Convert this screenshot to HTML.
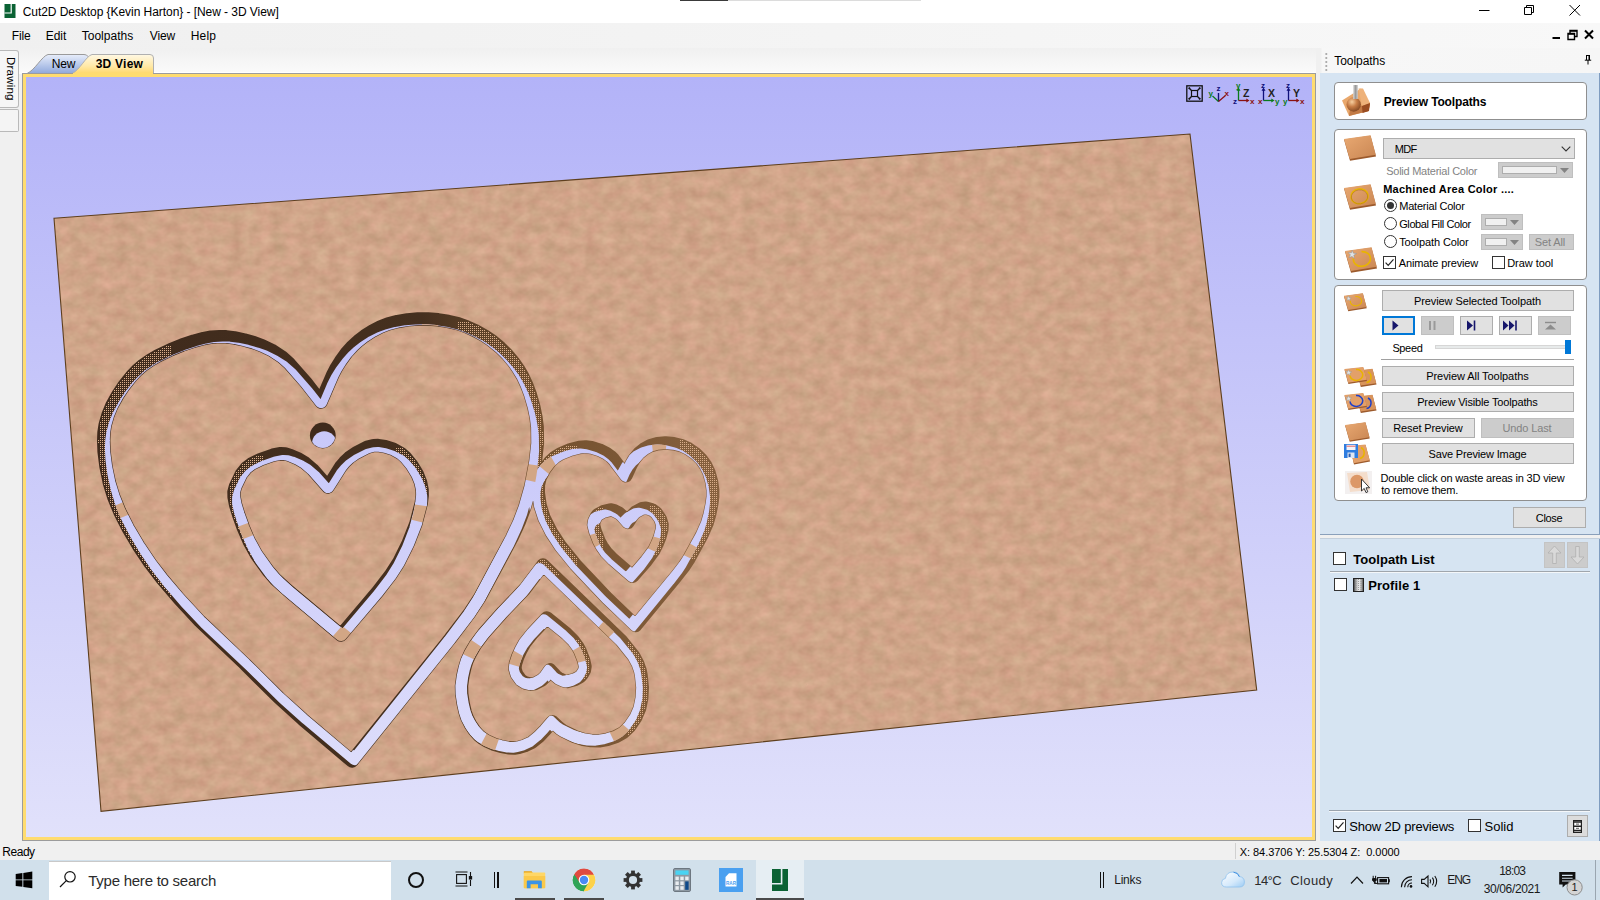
<!DOCTYPE html>
<html lang="en"><head><meta charset="utf-8"><title>Cut2D Desktop {Kevin Harton} - [New - 3D View]</title>
<style>
*{box-sizing:border-box;margin:0;padding:0}
html,body{width:1600px;height:900px;overflow:hidden;background:#f0f0f0}
body{position:relative;font-family:"Liberation Sans",sans-serif;font-size:12px;color:#000}
.t{position:absolute;white-space:pre;line-height:1;display:block}
.abs{position:absolute}
#titlebar{position:absolute;left:0;top:0;width:1600px;height:23px;background:#fff}
#menubar{position:absolute;left:0;top:23px;width:1600px;height:25px;background:linear-gradient(90deg,#f0f0f0,#f3f3f3 40%,#f8f8f8)}
#tabstrip{position:absolute;left:0;top:48px;width:1320px;height:26px;background:linear-gradient(#f0f0f0,#fbfbfb)}
#viewwrap{position:absolute;left:22px;top:73px;width:1294px;height:768px;background:#9c9c9c}
#viewyellow{position:absolute;left:1px;top:1px;width:1292px;height:766px;background:#ffdc70}
#view{position:absolute;left:3px;top:3px;width:1286px;height:760px;background:linear-gradient(#b3b3f8,#e1e1fb);overflow:hidden}
#side{position:absolute;left:1320px;top:48px;width:280px;height:793px;background:#d6e4f2}
#sidehead{position:absolute;left:0;top:0;width:280px;height:25px;background:linear-gradient(90deg,#f0f0f0 0,#f0f0f0 1px,#f7f7f7 2px,#f6f6f6)}
#statusbar{position:absolute;left:0;top:841px;width:1600px;height:19px;background:#f0f0f0}
#taskbar{position:absolute;left:0;top:860px;width:1600px;height:40px;background:#d1e0eb}
.box{position:absolute;background:#fff;border:1px solid #8f8f8f;border-radius:4px}
.btn{position:absolute;background:#e1e1e1;border:1px solid #adadad}
.btn.dis{background:#cccccc;border-color:#bfbfbf}
.cb{position:absolute;width:13px;height:13px;background:#fff;border:1px solid #333}
.rad{position:absolute;width:13px;height:13px;background:#fff;border:1px solid #333;border-radius:50%}
</style></head><body>

<div id="titlebar">
<div class="abs" style="left:680px;top:0;width:48px;height:1px;background:#3a3a3a"></div>
<div class="abs" style="left:728px;top:0;width:193px;height:1px;background:#dcdcdc"></div>
<svg class="abs" style="left:4px;top:4px" width="12" height="14" viewBox="0 0 12 14"><rect x="0.5" y="0" width="11" height="14" fill="#0b6234"/><path d="M6.6 0V8.4H0.5V9.6H7.8V0Z" fill="#fff"/></svg>
<span class="t" style="left:22.7px;top:6.00px;font-size:12px;letter-spacing:-0.056px;">Cut2D Desktop {Kevin Harton} - [New - 3D View]</span>
<svg class="abs" style="left:1470px;top:0" width="130" height="23" viewBox="0 0 130 23" fill="none" stroke="#000" stroke-width="1"><path d="M9 10.5H19.5"/><path d="M54.5 7.5H61.5V14.5H54.5Z M56.5 7.5V5.5H63.5V12.5H61.5"/><path d="M99.5 5L110 15.5M110 5L99.5 15.5"/></svg>
</div>
<div id="menubar">
<span class="t" style="left:11.7px;top:7.00px;font-size:12px;letter-spacing:-0.084px;">File</span>
<span class="t" style="left:45.7px;top:7.00px;font-size:12px;letter-spacing:-0.044px;">Edit</span>
<span class="t" style="left:81.7px;top:7.00px;font-size:12px;letter-spacing:0.015px;">Toolpaths</span>
<span class="t" style="left:149.7px;top:7.00px;font-size:12px;letter-spacing:-0.073px;">View</span>
<span class="t" style="left:190.7px;top:7.00px;font-size:12px;letter-spacing:0.205px;">Help</span>
<svg class="abs" style="left:1548px;top:6px" width="50" height="12" viewBox="0 0 50 12" fill="none" stroke="#000"><path d="M4.5 9H12" stroke-width="2"/><path d="M20 4.5H26.5V10.5H20Z M22 4V1.5H29V7.5H27" stroke-width="1.4"/><path d="M20 5H26.5M22 2H29" stroke-width="1.6"/><path d="M37 1.5L45 9.5M45 1.5L37 9.5" stroke-width="2"/></svg>
</div>
<div id="tabstrip"></div>
<div class="abs" style="left:22px;top:72px;width:1294px;height:1px;background:#fff"></div>
<div class="abs" style="left:1316px;top:48px;width:4px;height:793px;background:#f0f0f0"></div>
<div class="abs" style="left:0;top:50px;width:19px;height:58px;background:#f6f6f6;border:1px solid #b9b9b9;border-left:none;border-radius:0 3px 3px 0"></div>
<div class="abs" style="left:0;top:109px;width:19px;height:23px;background:#f4f4f4;border:1px solid #b9b9b9;border-left:none;border-radius:0 2px 2px 0"></div>
<span class="t" style="left:4.5px;top:57px;font-size:11.5px;letter-spacing:0.2px;writing-mode:vertical-rl;line-height:12px">Drawing</span>
<svg class="abs" style="left:26px;top:52px" width="140" height="24" viewBox="0 0 140 24"><defs><linearGradient id="tb" x1="0" y1="0" x2="0" y2="1"><stop offset="0" stop-color="#e8eefb"/><stop offset="1" stop-color="#8fa8dc"/></linearGradient><linearGradient id="ty" x1="0" y1="0" x2="0" y2="1"><stop offset="0" stop-color="#fff8e4"/><stop offset="0.6" stop-color="#ffe9a8"/><stop offset="1" stop-color="#ffd86c"/></linearGradient></defs><path d="M1 21.5 C9 18 16 4 22 2.5 H58 Q61 2.5 62 4.5 V21.5Z" fill="url(#tb)" stroke="#9a9a9a" stroke-width="1"/><path d="M46 21.5 C54 18 60 4 66 2.5 H124 Q127.5 2.5 127.5 6 V21.5 H46Z" fill="url(#ty)"/><path d="M46 21.5 C54 18 60 4 66 2.5 H124 Q127.5 2.5 127.5 6 V21.5" fill="none" stroke="#b0b0b0" stroke-width="1"/></svg>
<span class="t" style="left:51.7px;top:58.00px;font-size:12px;letter-spacing:-0.169px;">New</span>
<span class="t" style="left:95.7px;top:58.00px;font-size:12px;font-weight:700;letter-spacing:0.242px;">3D View</span>
<div id="viewwrap"><div id="viewyellow"><div id="view">
<svg class="abs" style="left:0;top:0" width="1287" height="760" viewBox="26 77 1287 760">
<defs><linearGradient id="bg" gradientUnits="userSpaceOnUse" x1="0" y1="77" x2="0" y2="837"><stop offset="0" stop-color="#b3b3f8"/><stop offset="1" stop-color="#e1e1fb"/></linearGradient><linearGradient id="wall" gradientUnits="userSpaceOnUse" x1="100" y1="0" x2="720" y2="0"><stop offset="0" stop-color="#3f2a1c"/><stop offset="0.52" stop-color="#45301f"/><stop offset="0.72" stop-color="#74512f"/><stop offset="1" stop-color="#86603e"/></linearGradient><pattern id="dith" patternUnits="userSpaceOnUse" x="0" y="0" width="2" height="2"><rect x="0" y="0" width="1" height="1" fill="#d9ad8a"/></pattern><mask id="dmask" maskUnits="userSpaceOnUse" x="26" y="77" width="1287" height="760"><g fill="#fff"><rect x="92" y="345" width="80" height="260"/><rect x="458" y="322" width="90" height="150"/><rect x="226" y="456" width="38" height="110"/><rect x="396" y="448" width="32" height="80"/><rect x="530" y="446" width="48" height="130"/><rect x="680" y="440" width="45" height="120"/><rect x="590" y="505" width="14" height="50"/><rect x="650" y="505" width="18" height="50"/><rect x="628" y="640" width="24" height="100"/><rect x="572" y="640" width="20" height="40"/></g></mask><filter id="mdf" x="0" y="0" width="100%" height="100%" color-interpolation-filters="sRGB"><feTurbulence type="fractalNoise" baseFrequency="0.07 0.09" numOctaves="3" seed="11" result="n"/><feColorMatrix in="n" type="matrix" values="0.13 0.05 0 0 0.722  0.13 -0.03 0 0 0.594  0.13 0.01 0 0 0.464  0 0 0 0 1" result="c"/><feComposite in="c" in2="SourceGraphic" operator="in"/></filter><mask id="slot" maskUnits="userSpaceOnUse" x="26" y="77" width="1287" height="760"><path d="M321.0,402.0 306.0,382.7 289.5,363.8 281.7,356.8 271.5,350.2 262.1,345.7 254.1,342.7 244.3,340.0 234.4,337.9 226.1,336.8 219.7,336.6 211.2,337.2 203.7,338.6 193.8,341.2 181.8,345.2 170.7,349.7 157.4,356.1 150.3,360.2 143.5,364.9 137.1,370.4 131.6,376.2 123.8,386.0 117.8,394.9 111.8,405.8 108.0,415.0 105.2,424.8 104.0,432.6 103.7,440.9 104.1,451.7 106.0,466.5 109.3,482.5 113.7,496.9 119.8,511.7 127.9,527.8 138.6,545.9 150.2,563.2 162.2,578.9 179.3,599.0 199.9,621.2 245.0,664.0 278.8,697.6 302.8,719.3 352.0,761.0 450.0,638.9 470.2,612.2 479.7,597.7 511.8,537.9 519.3,521.7 524.8,507.2 530.5,487.2 535.4,461.5 537.4,443.2 537.2,427.0 535.9,417.0 533.8,406.8 530.3,394.7 526.8,385.3 522.6,376.2 518.3,369.0 513.6,362.2 507.1,354.5 500.0,347.5 491.8,340.8 484.8,336.0 475.5,330.8 466.0,326.5 458.3,323.8 448.3,321.4 438.1,319.8 428.0,319.0 417.8,319.0 407.5,319.9 397.5,321.6 388.0,324.1 380.3,327.1 373.1,330.7 364.7,336.0 358.4,340.8 352.4,346.4 346.8,352.5 340.5,361.2 336.1,368.2 332.5,375.3 321.0,402.0Z M328.0,487.0 312.6,469.5 304.2,462.4 298.8,459.2 289.3,455.1 285.3,454.0 280.7,453.7 272.8,455.2 260.6,459.5 251.4,464.1 246.4,467.8 241.4,474.1 235.5,486.3 234.0,491.9 234.1,496.9 235.6,504.8 238.6,514.6 243.3,527.6 249.0,541.0 256.7,554.9 268.4,571.2 274.9,578.7 287.2,589.9 341.0,635.0 378.0,591.3 390.8,574.7 399.0,561.9 408.2,543.2 415.9,523.6 421.2,503.4 422.2,495.5 422.1,489.8 420.5,482.2 417.3,474.3 411.7,465.0 405.3,457.3 400.7,453.3 393.1,449.2 385.2,446.7 378.0,445.5 373.5,445.6 367.3,447.3 356.1,453.0 349.4,457.6 344.6,462.2 340.7,466.9 328.0,487.0Z M625.9,475.8 613.6,459.4 610.5,456.4 606.4,453.5 599.5,450.1 591.6,447.7 585.7,446.9 579.2,447.5 570.4,449.8 560.5,453.9 554.8,457.4 549.9,461.9 544.3,469.4 540.1,477.6 538.4,484.8 538.3,492.8 540.1,505.6 544.1,518.0 551.4,532.5 560.7,546.6 575.5,564.8 606.7,597.9 635.6,625.5 676.0,576.5 684.3,565.8 688.2,559.9 701.6,535.6 707.1,523.1 709.5,514.9 711.7,504.3 712.7,496.7 712.7,490.0 711.5,481.5 708.9,472.4 705.6,465.5 701.2,459.3 695.1,453.4 688.6,448.9 681.8,445.7 673.7,443.7 665.5,443.0 657.3,443.7 650.4,445.7 644.0,449.2 639.0,453.3 634.1,459.2 630.8,464.9 625.9,475.8Z M543.0,565.0 524.8,589.0 503.0,611.8 483.7,633.5 475.1,645.1 470.2,653.5 466.8,661.1 464.8,667.6 462.9,676.0 461.5,685.9 461.7,693.8 463.2,703.7 465.1,712.1 467.2,718.2 470.9,725.3 474.4,730.4 478.5,735.1 481.6,737.8 486.6,740.9 494.3,744.3 500.5,746.2 508.3,747.8 514.5,748.0 518.8,747.4 524.7,745.6 532.0,742.2 538.9,736.5 545.0,730.2 552.3,721.7 559.5,728.4 563.3,731.0 574.9,736.6 583.3,739.3 591.3,740.6 599.3,740.8 607.4,739.4 615.8,736.7 623.3,732.5 629.4,726.7 635.5,717.8 639.6,708.3 641.7,698.1 642.3,687.4 641.0,675.0 640.0,670.2 637.8,663.9 633.7,656.3 620.9,640.3 543.0,565.0Z M627.8,522.5 622.2,516.0 619.1,513.3 613.6,510.5 610.5,509.9 603.2,511.8 598.0,514.6 596.2,516.8 594.1,521.2 593.5,525.0 595.2,531.5 599.0,541.2 601.8,546.3 606.1,552.4 612.9,559.4 632.6,576.4 646.0,561.0 653.7,550.6 657.0,543.9 659.8,536.9 661.8,529.6 662.1,524.7 660.3,519.0 655.9,512.7 651.5,509.6 646.0,508.1 642.1,508.6 635.6,512.1 632.4,515.4 627.8,522.5Z M549.9,669.8 555.5,675.9 558.5,678.4 564.0,681.0 567.2,681.5 574.7,679.5 580.1,676.6 582.0,674.4 584.4,670.2 585.0,666.5 583.6,660.2 580.0,651.0 577.3,646.1 573.1,640.4 566.4,633.8 546.9,617.9 532.6,633.1 524.4,643.4 520.8,649.9 517.7,656.8 515.4,663.9 514.9,668.6 516.5,674.1 520.8,680.1 525.2,682.9 530.8,684.2 534.8,683.6 541.6,680.0 545.0,676.8 549.9,669.8Z" fill="none" stroke="#fff" stroke-width="12.2" stroke-linejoin="round"/><circle cx="322.8" cy="435.5" r="12.5" fill="#fff"/></mask></defs>
<polygon points="54,218.3 1190,134 1256.7,690 101,811.3" fill="#cfa483" filter="url(#mdf)"/>
<polygon points="54,218.3 1190,134 1256.7,690 101,811.3" fill="none" stroke="#5e3f1e" stroke-width="1.1" stroke-linejoin="miter"/>
<path d="M321.0,402.0 306.0,382.7 289.5,363.8 281.7,356.8 271.5,350.2 262.1,345.7 254.1,342.7 244.3,340.0 234.4,337.9 226.1,336.8 219.7,336.6 211.2,337.2 203.7,338.6 193.8,341.2 181.8,345.2 170.7,349.7 157.4,356.1 150.3,360.2 143.5,364.9 137.1,370.4 131.6,376.2 123.8,386.0 117.8,394.9 111.8,405.8 108.0,415.0 105.2,424.8 104.0,432.6 103.7,440.9 104.1,451.7 106.0,466.5 109.3,482.5 113.7,496.9 119.8,511.7 127.9,527.8 138.6,545.9 150.2,563.2 162.2,578.9 179.3,599.0 199.9,621.2 245.0,664.0 278.8,697.6 302.8,719.3 352.0,761.0 450.0,638.9 470.2,612.2 479.7,597.7 511.8,537.9 519.3,521.7 524.8,507.2 530.5,487.2 535.4,461.5 537.4,443.2 537.2,427.0 535.9,417.0 533.8,406.8 530.3,394.7 526.8,385.3 522.6,376.2 518.3,369.0 513.6,362.2 507.1,354.5 500.0,347.5 491.8,340.8 484.8,336.0 475.5,330.8 466.0,326.5 458.3,323.8 448.3,321.4 438.1,319.8 428.0,319.0 417.8,319.0 407.5,319.9 397.5,321.6 388.0,324.1 380.3,327.1 373.1,330.7 364.7,336.0 358.4,340.8 352.4,346.4 346.8,352.5 340.5,361.2 336.1,368.2 332.5,375.3 321.0,402.0Z M328.0,487.0 312.6,469.5 304.2,462.4 298.8,459.2 289.3,455.1 285.3,454.0 280.7,453.7 272.8,455.2 260.6,459.5 251.4,464.1 246.4,467.8 241.4,474.1 235.5,486.3 234.0,491.9 234.1,496.9 235.6,504.8 238.6,514.6 243.3,527.6 249.0,541.0 256.7,554.9 268.4,571.2 274.9,578.7 287.2,589.9 341.0,635.0 378.0,591.3 390.8,574.7 399.0,561.9 408.2,543.2 415.9,523.6 421.2,503.4 422.2,495.5 422.1,489.8 420.5,482.2 417.3,474.3 411.7,465.0 405.3,457.3 400.7,453.3 393.1,449.2 385.2,446.7 378.0,445.5 373.5,445.6 367.3,447.3 356.1,453.0 349.4,457.6 344.6,462.2 340.7,466.9 328.0,487.0Z M625.9,475.8 613.6,459.4 610.5,456.4 606.4,453.5 599.5,450.1 591.6,447.7 585.7,446.9 579.2,447.5 570.4,449.8 560.5,453.9 554.8,457.4 549.9,461.9 544.3,469.4 540.1,477.6 538.4,484.8 538.3,492.8 540.1,505.6 544.1,518.0 551.4,532.5 560.7,546.6 575.5,564.8 606.7,597.9 635.6,625.5 676.0,576.5 684.3,565.8 688.2,559.9 701.6,535.6 707.1,523.1 709.5,514.9 711.7,504.3 712.7,496.7 712.7,490.0 711.5,481.5 708.9,472.4 705.6,465.5 701.2,459.3 695.1,453.4 688.6,448.9 681.8,445.7 673.7,443.7 665.5,443.0 657.3,443.7 650.4,445.7 644.0,449.2 639.0,453.3 634.1,459.2 630.8,464.9 625.9,475.8Z M543.0,565.0 524.8,589.0 503.0,611.8 483.7,633.5 475.1,645.1 470.2,653.5 466.8,661.1 464.8,667.6 462.9,676.0 461.5,685.9 461.7,693.8 463.2,703.7 465.1,712.1 467.2,718.2 470.9,725.3 474.4,730.4 478.5,735.1 481.6,737.8 486.6,740.9 494.3,744.3 500.5,746.2 508.3,747.8 514.5,748.0 518.8,747.4 524.7,745.6 532.0,742.2 538.9,736.5 545.0,730.2 552.3,721.7 559.5,728.4 563.3,731.0 574.9,736.6 583.3,739.3 591.3,740.6 599.3,740.8 607.4,739.4 615.8,736.7 623.3,732.5 629.4,726.7 635.5,717.8 639.6,708.3 641.7,698.1 642.3,687.4 641.0,675.0 640.0,670.2 637.8,663.9 633.7,656.3 620.9,640.3 543.0,565.0Z M627.8,522.5 622.2,516.0 619.1,513.3 613.6,510.5 610.5,509.9 603.2,511.8 598.0,514.6 596.2,516.8 594.1,521.2 593.5,525.0 595.2,531.5 599.0,541.2 601.8,546.3 606.1,552.4 612.9,559.4 632.6,576.4 646.0,561.0 653.7,550.6 657.0,543.9 659.8,536.9 661.8,529.6 662.1,524.7 660.3,519.0 655.9,512.7 651.5,509.6 646.0,508.1 642.1,508.6 635.6,512.1 632.4,515.4 627.8,522.5Z M549.9,669.8 555.5,675.9 558.5,678.4 564.0,681.0 567.2,681.5 574.7,679.5 580.1,676.6 582.0,674.4 584.4,670.2 585.0,666.5 583.6,660.2 580.0,651.0 577.3,646.1 573.1,640.4 566.4,633.8 546.9,617.9 532.6,633.1 524.4,643.4 520.8,649.9 517.7,656.8 515.4,663.9 514.9,668.6 516.5,674.1 520.8,680.1 525.2,682.9 530.8,684.2 534.8,683.6 541.6,680.0 545.0,676.8 549.9,669.8Z" fill="none" stroke="url(#wall)" stroke-width="13.4" stroke-linejoin="round"/>
<circle cx="322.8" cy="435.5" r="12.9" fill="#3f2a1c"/>
<g mask="url(#dmask)" shape-rendering="crispEdges"><path d="M321.0,402.0 306.0,382.7 289.5,363.8 281.7,356.8 271.5,350.2 262.1,345.7 254.1,342.7 244.3,340.0 234.4,337.9 226.1,336.8 219.7,336.6 211.2,337.2 203.7,338.6 193.8,341.2 181.8,345.2 170.7,349.7 157.4,356.1 150.3,360.2 143.5,364.9 137.1,370.4 131.6,376.2 123.8,386.0 117.8,394.9 111.8,405.8 108.0,415.0 105.2,424.8 104.0,432.6 103.7,440.9 104.1,451.7 106.0,466.5 109.3,482.5 113.7,496.9 119.8,511.7 127.9,527.8 138.6,545.9 150.2,563.2 162.2,578.9 179.3,599.0 199.9,621.2 245.0,664.0 278.8,697.6 302.8,719.3 352.0,761.0 450.0,638.9 470.2,612.2 479.7,597.7 511.8,537.9 519.3,521.7 524.8,507.2 530.5,487.2 535.4,461.5 537.4,443.2 537.2,427.0 535.9,417.0 533.8,406.8 530.3,394.7 526.8,385.3 522.6,376.2 518.3,369.0 513.6,362.2 507.1,354.5 500.0,347.5 491.8,340.8 484.8,336.0 475.5,330.8 466.0,326.5 458.3,323.8 448.3,321.4 438.1,319.8 428.0,319.0 417.8,319.0 407.5,319.9 397.5,321.6 388.0,324.1 380.3,327.1 373.1,330.7 364.7,336.0 358.4,340.8 352.4,346.4 346.8,352.5 340.5,361.2 336.1,368.2 332.5,375.3 321.0,402.0Z M328.0,487.0 312.6,469.5 304.2,462.4 298.8,459.2 289.3,455.1 285.3,454.0 280.7,453.7 272.8,455.2 260.6,459.5 251.4,464.1 246.4,467.8 241.4,474.1 235.5,486.3 234.0,491.9 234.1,496.9 235.6,504.8 238.6,514.6 243.3,527.6 249.0,541.0 256.7,554.9 268.4,571.2 274.9,578.7 287.2,589.9 341.0,635.0 378.0,591.3 390.8,574.7 399.0,561.9 408.2,543.2 415.9,523.6 421.2,503.4 422.2,495.5 422.1,489.8 420.5,482.2 417.3,474.3 411.7,465.0 405.3,457.3 400.7,453.3 393.1,449.2 385.2,446.7 378.0,445.5 373.5,445.6 367.3,447.3 356.1,453.0 349.4,457.6 344.6,462.2 340.7,466.9 328.0,487.0Z M625.9,475.8 613.6,459.4 610.5,456.4 606.4,453.5 599.5,450.1 591.6,447.7 585.7,446.9 579.2,447.5 570.4,449.8 560.5,453.9 554.8,457.4 549.9,461.9 544.3,469.4 540.1,477.6 538.4,484.8 538.3,492.8 540.1,505.6 544.1,518.0 551.4,532.5 560.7,546.6 575.5,564.8 606.7,597.9 635.6,625.5 676.0,576.5 684.3,565.8 688.2,559.9 701.6,535.6 707.1,523.1 709.5,514.9 711.7,504.3 712.7,496.7 712.7,490.0 711.5,481.5 708.9,472.4 705.6,465.5 701.2,459.3 695.1,453.4 688.6,448.9 681.8,445.7 673.7,443.7 665.5,443.0 657.3,443.7 650.4,445.7 644.0,449.2 639.0,453.3 634.1,459.2 630.8,464.9 625.9,475.8Z M543.0,565.0 524.8,589.0 503.0,611.8 483.7,633.5 475.1,645.1 470.2,653.5 466.8,661.1 464.8,667.6 462.9,676.0 461.5,685.9 461.7,693.8 463.2,703.7 465.1,712.1 467.2,718.2 470.9,725.3 474.4,730.4 478.5,735.1 481.6,737.8 486.6,740.9 494.3,744.3 500.5,746.2 508.3,747.8 514.5,748.0 518.8,747.4 524.7,745.6 532.0,742.2 538.9,736.5 545.0,730.2 552.3,721.7 559.5,728.4 563.3,731.0 574.9,736.6 583.3,739.3 591.3,740.6 599.3,740.8 607.4,739.4 615.8,736.7 623.3,732.5 629.4,726.7 635.5,717.8 639.6,708.3 641.7,698.1 642.3,687.4 641.0,675.0 640.0,670.2 637.8,663.9 633.7,656.3 620.9,640.3 543.0,565.0Z M627.8,522.5 622.2,516.0 619.1,513.3 613.6,510.5 610.5,509.9 603.2,511.8 598.0,514.6 596.2,516.8 594.1,521.2 593.5,525.0 595.2,531.5 599.0,541.2 601.8,546.3 606.1,552.4 612.9,559.4 632.6,576.4 646.0,561.0 653.7,550.6 657.0,543.9 659.8,536.9 661.8,529.6 662.1,524.7 660.3,519.0 655.9,512.7 651.5,509.6 646.0,508.1 642.1,508.6 635.6,512.1 632.4,515.4 627.8,522.5Z M549.9,669.8 555.5,675.9 558.5,678.4 564.0,681.0 567.2,681.5 574.7,679.5 580.1,676.6 582.0,674.4 584.4,670.2 585.0,666.5 583.6,660.2 580.0,651.0 577.3,646.1 573.1,640.4 566.4,633.8 546.9,617.9 532.6,633.1 524.4,643.4 520.8,649.9 517.7,656.8 515.4,663.9 514.9,668.6 516.5,674.1 520.8,680.1 525.2,682.9 530.8,684.2 534.8,683.6 541.6,680.0 545.0,676.8 549.9,669.8Z" fill="none" stroke="url(#dith)" stroke-width="10.5" stroke-linejoin="round"/></g>
<g mask="url(#slot)">
<path d="M322.2,410.9 307.5,392.2 291.3,373.9 283.6,367.0 273.6,360.7 264.5,356.3 256.7,353.5 247.2,350.8 237.5,348.7 229.4,347.7 223.1,347.5 214.9,348.1 207.6,349.4 198.0,352.0 186.4,355.9 175.6,360.2 162.7,366.4 155.8,370.4 149.2,374.9 143.0,380.3 137.7,385.9 130.2,395.4 124.5,404.1 118.7,414.6 115.0,423.6 112.4,433.0 111.3,440.6 111.0,448.6 111.5,459.2 113.4,473.5 116.8,489.0 121.1,503.0 127.1,517.4 135.2,533.0 145.7,550.5 157.1,567.3 168.9,582.5 185.6,602.0 205.9,623.6 250.0,665.1 283.1,697.6 306.6,718.7 354.8,759.2 449.3,640.8 468.8,614.8 477.9,600.8 508.7,542.8 515.9,527.0 521.2,513.0 526.6,493.6 531.2,468.7 533.0,450.9 532.7,435.2 531.4,425.5 529.3,415.6 525.8,403.9 522.4,394.7 518.1,385.9 514.0,378.9 509.3,372.4 502.9,364.9 496.0,358.1 488.0,351.6 481.1,346.9 472.0,341.8 462.8,337.7 455.2,335.1 445.5,332.7 435.6,331.2 425.7,330.4 415.8,330.5 405.8,331.3 396.1,332.9 386.9,335.4 379.4,338.3 372.4,341.7 364.3,346.9 358.2,351.6 352.3,357.0 347.0,363.0 340.8,371.4 336.6,378.2 333.2,385.0 322.2,410.9Z M329.6,493.4 314.5,476.4 306.3,469.5 301.0,466.4 291.7,462.5 287.8,461.4 283.3,461.1 275.7,462.5 263.8,466.8 254.9,471.2 250.1,474.8 245.2,480.9 239.6,492.7 238.2,498.2 238.2,503.0 239.8,510.7 242.8,520.2 247.4,532.7 253.1,545.8 260.6,559.3 272.2,575.1 278.5,582.3 290.6,593.2 343.2,637.0 378.9,594.6 391.3,578.4 399.1,566.0 408.0,547.9 415.3,528.9 420.4,509.3 421.3,501.7 421.1,496.1 419.5,488.7 416.4,481.1 410.9,472.0 404.6,464.5 400.1,460.7 392.7,456.8 385.0,454.3 377.9,453.1 373.6,453.3 367.6,454.9 356.7,460.4 350.2,464.9 345.6,469.3 341.8,473.9 329.6,493.4Z M619.4,482.6 607.2,466.6 604.2,463.7 600.2,460.8 593.5,457.6 585.8,455.3 580.0,454.5 573.8,455.0 565.2,457.4 555.5,461.3 550.1,464.6 545.3,469.0 539.9,476.3 535.9,484.3 534.3,491.3 534.2,499.0 536.1,511.5 540.1,523.4 547.3,537.5 556.4,551.2 570.9,568.9 601.5,601.0 629.8,627.8 668.8,580.2 676.8,569.8 680.6,564.1 693.4,540.5 698.7,528.4 701.0,520.4 703.1,510.1 703.9,502.8 703.9,496.3 702.7,488.1 700.1,479.3 696.8,472.6 692.5,466.5 686.6,460.8 680.2,456.4 673.5,453.4 665.6,451.4 657.7,450.7 649.7,451.4 643.0,453.4 636.8,456.7 631.9,460.7 627.2,466.4 624.0,472.0 619.4,482.6Z M539.3,569.0 521.7,592.3 500.7,614.4 482.0,635.5 473.7,646.7 469.0,654.9 465.8,662.3 463.9,668.5 462.1,676.7 460.9,686.3 461.1,693.9 462.6,703.6 464.5,711.8 466.5,717.6 470.2,724.6 473.6,729.5 477.6,734.0 480.7,736.6 485.6,739.7 493.1,742.9 499.2,744.8 506.7,746.4 512.8,746.6 517.0,746.0 522.7,744.3 529.8,740.9 536.5,735.4 542.4,729.3 549.4,721.0 556.5,727.6 560.2,730.1 571.5,735.5 579.7,738.1 587.5,739.4 595.3,739.6 603.1,738.3 611.3,735.6 618.6,731.5 624.5,725.9 630.4,717.3 634.2,708.1 636.3,698.1 636.7,687.8 635.4,675.8 634.4,671.1 632.2,665.0 628.2,657.6 615.6,642.1 539.3,569.0Z M621.5,527.9 616.0,521.5 613.0,518.9 607.7,516.2 604.6,515.6 597.5,517.4 592.5,520.2 590.8,522.3 588.7,526.5 588.2,530.3 589.9,536.6 593.6,546.0 596.4,551.0 600.6,556.8 607.3,563.6 626.5,580.1 639.5,565.2 646.9,555.0 650.1,548.6 652.8,541.8 654.6,534.7 654.9,529.9 653.1,524.4 648.8,518.3 644.5,515.3 639.1,513.8 635.3,514.4 629.0,517.8 625.9,520.9 621.5,527.9Z M546.7,670.7 552.2,676.7 555.1,679.1 560.5,681.6 563.6,682.1 570.9,680.1 576.1,677.3 578.0,675.2 580.2,671.1 580.9,667.5 579.4,661.4 575.9,652.5 573.2,647.7 569.1,642.2 562.5,635.8 543.5,620.3 529.6,635.1 521.8,645.1 518.2,651.4 515.3,658.1 513.1,665.0 512.7,669.6 514.3,674.8 518.5,680.7 522.8,683.4 528.2,684.7 532.1,684.1 538.7,680.6 542.0,677.5 546.7,670.7Z" fill="none" stroke="url(#bg)" stroke-width="12.2" stroke-linejoin="round"/>
<circle cx="324.2" cy="443.4" r="12.1" fill="url(#bg)"/>
<path d="M121.1,503.0 121.9,504.9 122.6,506.9 123.4,508.9 124.1,510.6 124.8,512.3 125.6,514.0 126.3,515.7 M437.6,331.4 435.6,331.2 433.6,331.0 431.6,330.8 429.7,330.6 427.7,330.5 425.7,330.4 423.8,330.4 421.8,330.3 M529.2,480.6 529.6,478.7 529.9,476.9 530.3,474.8 530.6,472.7 530.9,470.7 531.2,468.7 531.5,466.7 531.8,464.6 M244.2,524.4 245.0,526.5 245.8,528.6 246.6,530.7 247.4,532.7 248.3,534.8 249.1,536.8 M417.6,521.2 418.1,519.2 418.7,517.2 419.2,515.2 419.6,513.2 420.0,511.2 420.4,509.3 420.7,507.3 421.0,505.4 M336.9,631.7 338.5,633.1 340.1,634.4 341.7,635.7 343.2,637.0 344.5,635.4 345.8,633.9 347.1,632.4 348.4,630.8 M554.1,462.1 553.4,462.5 552.7,462.9 552.0,463.3 551.4,463.7 550.7,464.2 550.1,464.6 549.4,465.1 548.8,465.7 548.1,466.2 547.5,466.8 546.9,467.4 546.4,467.9 545.9,468.4 545.3,469.0 544.8,469.6 544.3,470.2 M665.6,451.4 664.8,451.3 664.0,451.2 663.3,451.1 662.5,451.0 661.7,450.9 660.9,450.8 660.1,450.8 659.3,450.8 658.5,450.7 657.7,450.7 656.9,450.8 656.1,450.8 655.2,450.8 654.4,450.9 653.6,450.9 652.8,451.0 M685.1,555.8 685.4,555.2 685.8,554.5 686.2,553.8 686.6,553.1 687.0,552.4 687.4,551.7 687.8,551.0 688.2,550.2 688.6,549.5 689.0,548.8 689.5,548.0 689.9,547.3 690.3,546.5 690.7,545.8 691.1,545.0 691.5,544.3 M476.1,643.3 474.9,645.1 473.7,646.7 472.7,648.4 471.7,650.0 470.8,651.6 469.9,653.2 469.0,654.9 468.2,656.6 M483.9,738.8 485.6,739.7 487.4,740.6 489.2,741.4 491.1,742.2 493.1,742.9 495.1,743.6 497.1,744.3 M611.3,735.6 613.2,734.7 615.1,733.7 616.9,732.7 618.6,731.5 620.1,730.3 621.7,728.9 623.1,727.5 624.5,725.9 M609.8,636.3 608.5,635.0 607.1,633.7 605.6,632.3 604.1,630.9 602.5,629.4 600.9,627.9 599.2,626.4 M589.4,535.1 589.6,535.8 589.9,536.6 590.1,537.3 590.4,538.1 590.7,538.9 591.0,539.6 591.3,540.4 591.6,541.2 591.9,541.9 592.2,542.6 592.5,543.4 592.8,544.1 593.1,544.7 593.3,545.4 593.6,546.0 594.0,546.8 594.4,547.5 M649.8,549.3 650.1,548.6 650.4,547.9 650.7,547.2 651.0,546.5 651.3,545.8 651.6,545.1 651.8,544.4 652.1,543.8 652.3,543.1 652.6,542.4 652.8,541.8 653.0,541.1 653.2,540.5 653.4,539.8 653.6,539.0 653.8,538.3 654.0,537.5 654.2,536.8 M517.6,652.8 517.2,653.5 516.9,654.1 516.6,654.8 516.3,655.5 516.0,656.1 515.8,656.8 515.5,657.4 515.3,658.1 515.0,658.7 514.8,659.3 514.6,660.0 514.3,660.8 514.1,661.5 513.9,662.2 513.7,662.9 513.5,663.6 513.3,664.3 513.1,665.0 M579.6,662.2 579.4,661.4 579.2,660.7 578.9,660.0 578.6,659.2 578.4,658.5 578.1,657.8 577.8,657.0 577.5,656.3 577.3,655.6 577.0,654.9 576.7,654.3 576.4,653.6 576.1,653.0 575.9,652.5 575.5,651.7 575.2,651.0 574.8,650.3 574.4,649.6" fill="none" stroke="#d2a685" stroke-width="12.4" stroke-linecap="butt"/>
</g>
<g font-family="Liberation Sans, sans-serif" font-weight="700">
<rect x="1186.8" y="85.8" width="15.4" height="15.4" fill="none" stroke="#111" stroke-width="1.3"/><rect x="1191.5" y="90.5" width="6" height="6" fill="none" stroke="#111" stroke-width="1.2"/><path d="M1189 88L1192 91M1200 88L1197 91M1189 99L1192 96M1200 99L1197 96" stroke="#111" stroke-width="1.2"/><g fill="#111"><circle cx="1189.3" cy="88.3" r="1"/><circle cx="1199.7" cy="88.3" r="1"/><circle cx="1189.3" cy="98.7" r="1"/><circle cx="1199.7" cy="98.7" r="1"/></g>
<path d="M1218.5 101.5V93" stroke="#10107a" stroke-width="1.4"/><path d="M1218.5 101.5L1212.5 96" stroke="#0a7a1a" stroke-width="1.2"/><path d="M1218.5 101.5L1225.5 95.5" stroke="#8a1010" stroke-width="1.2"/>
<text x="1216.5" y="90.5" font-size="8" fill="#10107a">z</text><text x="1208.5" y="96" font-size="8" fill="#0a7a1a">y</text><text x="1224.5" y="96" font-size="8" fill="#8a1010">x</text>
<path d="M1238.5 100.5V89.5" stroke="#0a7a1a" stroke-width="1.3"/><path d="M1238.5 87.5l-2 3.2h4z" fill="#0a7a1a"/>
<path d="M1238.5 100.5H1247.5" stroke="#8a1010" stroke-width="1.3"/><path d="M1249.5 100.5l-3.2 -2v4z" fill="#8a1010"/>
<text x="1236" y="87.5" font-size="8" fill="#0a7a1a">y</text>
<text x="1250" y="104" font-size="8" fill="#8a1010">x</text>
<text x="1233" y="104" font-size="8" fill="#10107a">z</text>
<text x="1243" y="97" font-size="10.5" fill="#222">Z</text>
<path d="M1263.5 100.5V89.5" stroke="#10107a" stroke-width="1.3"/><path d="M1263.5 87.5l-2 3.2h4z" fill="#10107a"/>
<path d="M1263.5 100.5H1272.5" stroke="#0a7a1a" stroke-width="1.3"/><path d="M1274.5 100.5l-3.2 -2v4z" fill="#0a7a1a"/>
<text x="1261" y="87.5" font-size="8" fill="#10107a">z</text>
<text x="1275" y="104" font-size="8" fill="#0a7a1a">y</text>
<text x="1258" y="104" font-size="8" fill="#8a1010">x</text>
<text x="1268" y="97" font-size="10.5" fill="#222">X</text>
<path d="M1288.5 100.5V89.5" stroke="#10107a" stroke-width="1.3"/><path d="M1288.5 87.5l-2 3.2h4z" fill="#10107a"/>
<path d="M1288.5 100.5H1297.5" stroke="#8a1010" stroke-width="1.3"/><path d="M1299.5 100.5l-3.2 -2v4z" fill="#8a1010"/>
<text x="1286" y="87.5" font-size="8" fill="#10107a">z</text>
<text x="1300" y="104" font-size="8" fill="#8a1010">x</text>
<text x="1283" y="104" font-size="8" fill="#0a7a1a">y</text>
<text x="1293" y="97" font-size="10.5" fill="#222">Y</text>
</g>
</svg>
</div></div></div>
<div class="abs" style="left:73px;top:73px;width:80px;height:1px;background:#ffdc70"></div>
<div id="side">
<div id="sidehead"></div>
<div class="abs" style="left:279px;top:25px;width:1px;height:768px;background:#7f9cc0"></div>
<svg class="abs" style="left:5px;top:5px" width="3" height="20" viewBox="0 0 3 20"><g fill="#a4a4a4"><rect x="0.4" y="0.1" width="1.8" height="1.8"/><rect x="0.4" y="4.1" width="1.8" height="1.8"/><rect x="0.4" y="8.1" width="1.8" height="1.8"/><rect x="0.4" y="12.1" width="1.8" height="1.8"/><rect x="0.4" y="16.1" width="1.8" height="1.8"/></g></svg>
<span class="t" style="left:14.2px;top:7.00px;font-size:12px;letter-spacing:-0.041px;">Toolpaths</span>
<svg class="abs" style="left:264px;top:7px" width="8" height="10" viewBox="0 0 8 10"><path d="M2 0.5H6M2.5 0.5V5M5.5 0.5V5M5 0.5V5M0.8 5.2H7.2M4 5.2V9.5" stroke="#000" stroke-width="1" fill="none"/></svg>
<div class="box" style="left:14px;top:34px;width:253px;height:38px"></div>
<svg class="abs" style="left:21px;top:36px" width="32" height="34" viewBox="0 0 32 34"><defs><radialGradient id="ball" cx="0.38" cy="0.32" r="0.75"><stop offset="0" stop-color="#f6cfa0"/><stop offset="0.45" stop-color="#c77d46"/><stop offset="1" stop-color="#7c431f"/></radialGradient><linearGradient id="shaft" x1="0" y1="0" x2="1" y2="0"><stop offset="0" stop-color="#d6d6d6"/><stop offset="0.5" stop-color="#9a9a9a"/><stop offset="1" stop-color="#c8c8c8"/></linearGradient></defs><path d="M1 16.5L20 4.5L29 19.5L27.5 27L8 32Z" fill="#e9a86c"/><path d="M8 32L27.5 27L29 19.5L9 24.5Z" fill="#c27a45"/><path d="M17.5 4.5H22L29 19L21 22Z" fill="#eeb27a"/><path d="M21 22L29 19L28 27L21.5 29Z" fill="#9a4d22"/><circle cx="12.7" cy="20.5" r="7.2" fill="url(#ball)"/><rect x="12.2" y="1" width="4.6" height="14" fill="url(#shaft)"/></svg>
<span class="t" style="left:63.7px;top:48.00px;font-size:12px;font-weight:700;letter-spacing:-0.155px;">Preview Toolpaths</span>
<div class="box" style="left:14px;top:81px;width:253px;height:151px"></div>
<svg class="abs" style="left:22.7px;top:86.5px" width="33" height="26" viewBox="0 0 33 26"><defs><linearGradient id="tan1" x1="0" y1="0" x2="1" y2="1"><stop offset="0" stop-color="#e9a972"/><stop offset="1" stop-color="#c98653"/></linearGradient></defs><path d="M1 4.5L27.5 0.8L33 21.5L7 25.8Z" fill="#9c5a2c"/><path d="M1 4L27.5 0.3L32.8 19.8L6.8 24Z" fill="url(#tan1)"/></svg>
<div class="btn" style="left:63px;top:90px;width:192px;height:21px"></div>
<span class="t" style="left:74.7px;top:96.00px;font-size:11px;letter-spacing:-0.609px;">MDF</span>
<svg class="abs" style="left:241px;top:98px" width="10" height="6" viewBox="0 0 10 6"><path d="M0.7 0.7L5 5L9.3 0.7" fill="none" stroke="#333" stroke-width="1.1"/></svg>
<span class="t" style="left:66.2px;top:118.00px;font-size:11px;color:#838383;letter-spacing:-0.249px;">Solid Material Color</span>
<div class="btn dis" style="left:178px;top:114px;width:75px;height:16px;background:#cccccc"></div>
<div class="abs" style="left:182px;top:118px;width:55px;height:8px;background:#f0f0f0;border:1px solid #adadad"></div>
<svg class="abs" style="left:240px;top:120px" width="9" height="5" viewBox="0 0 9 5"><path d="M0 0H9L4.5 5Z" fill="#838383"/></svg>
<svg class="abs" style="left:22.7px;top:136px" width="33" height="26" viewBox="0 0 33 26"><defs><linearGradient id="tan2" x1="0" y1="0" x2="1" y2="1"><stop offset="0" stop-color="#e9a972"/><stop offset="1" stop-color="#c98653"/></linearGradient></defs><path d="M1 4.5L27.5 0.8L33 21.5L7 25.8Z" fill="#9c5a2c"/><path d="M1 4L27.5 0.3L32.8 19.8L6.8 24Z" fill="url(#tan2)"/><ellipse cx="16.5" cy="12.3" rx="8.6" ry="7.4" transform="rotate(-8 16.5 12.3)" fill="none" stroke="#e9b400" stroke-width="1.6"/><ellipse cx="16.5" cy="12.9" rx="8.2" ry="7" transform="rotate(-8 16.5 12.9)" fill="none" stroke="#a86a20" stroke-width="0.5"/></svg>
<span class="t" style="left:63.2px;top:136.00px;font-size:11px;font-weight:700;letter-spacing:0.254px;">Machined Area Color ....</span>
<div class="rad" style="left:64px;top:151px"></div>
<div class="abs" style="left:67px;top:154px;width:7px;height:7px;border-radius:50%;background:#333"></div>
<span class="t" style="left:79.2px;top:153.00px;font-size:11px;letter-spacing:-0.212px;">Material Color</span>
<div class="rad" style="left:64px;top:169px"></div>
<span class="t" style="left:79.2px;top:171.00px;font-size:11px;letter-spacing:-0.397px;">Global Fill Color</span>
<div class="rad" style="left:64px;top:187px"></div>
<span class="t" style="left:79.2px;top:189.00px;font-size:11px;letter-spacing:-0.103px;">Toolpath Color</span>
<div class="btn dis" style="left:161px;top:166px;width:42px;height:16px;background:#cccccc"></div>
<div class="abs" style="left:165px;top:170px;width:22px;height:8px;background:#f0f0f0;border:1px solid #adadad"></div>
<svg class="abs" style="left:190px;top:172px" width="9" height="5" viewBox="0 0 9 5"><path d="M0 0H9L4.5 5Z" fill="#838383"/></svg>
<div class="btn dis" style="left:161px;top:186px;width:42px;height:16px;background:#cccccc"></div>
<div class="abs" style="left:165px;top:190px;width:22px;height:8px;background:#f0f0f0;border:1px solid #adadad"></div>
<svg class="abs" style="left:190px;top:192px" width="9" height="5" viewBox="0 0 9 5"><path d="M0 0H9L4.5 5Z" fill="#838383"/></svg>
<div class="btn dis" style="left:209px;top:186px;width:45px;height:16px"></div>
<span class="t" style="left:214.7px;top:189.00px;font-size:11px;color:#838383;letter-spacing:-0.098px;">Set All</span>
<svg class="abs" style="left:23.7px;top:198.7px" width="33" height="26" viewBox="0 0 33 26"><defs><linearGradient id="tan3" x1="0" y1="0" x2="1" y2="1"><stop offset="0" stop-color="#e9a972"/><stop offset="1" stop-color="#c98653"/></linearGradient></defs><path d="M1 4.5L27.5 0.8L33 21.5L7 25.8Z" fill="#9c5a2c"/><path d="M1 4L27.5 0.3L32.8 19.8L6.8 24Z" fill="url(#tan3)"/><path d="M17.5 4.6A8.6 7.4 -8 1 1 9.4 11.5" fill="none" stroke="#e9b400" stroke-width="1.7"/><path d="M8.2 3.2L9.4 6.2L12.6 6.6L9.8 8.2L10.4 11.6L8 9.4L5 10.6L6.4 7.8L4.2 5.6L7.4 5.8Z" fill="#dfe3e6" stroke="#8c9094" stroke-width="0.5"/></svg>
<div class="cb" style="left:63px;top:208px"></div>
<svg class="abs" style="left:63px;top:208px" width="13" height="13" viewBox="0 0 13 13"><path d="M2.6 6.6L5.2 9.3L10.5 3.4" fill="none" stroke="#222" stroke-width="1.2"/></svg>
<span class="t" style="left:78.7px;top:210.00px;font-size:11px;letter-spacing:-0.121px;">Animate preview</span>
<div class="cb" style="left:172px;top:208px"></div>
<span class="t" style="left:187.2px;top:210.00px;font-size:11px;letter-spacing:-0.052px;">Draw tool</span>
<div class="box" style="left:14px;top:237px;width:253px;height:216px"></div>
<svg class="abs" style="left:22.7px;top:245.2px" width="24" height="18.5" viewBox="0 0 33 26"><defs><linearGradient id="tan4" x1="0" y1="0" x2="1" y2="1"><stop offset="0" stop-color="#e9a972"/><stop offset="1" stop-color="#c98653"/></linearGradient></defs><path d="M1 4.5L27.5 0.8L33 21.5L7 25.8Z" fill="#9c5a2c"/><path d="M1 4L27.5 0.3L32.8 19.8L6.8 24Z" fill="url(#tan4)"/><path d="M17 5A8 6.6 -8 1 1 10 11" fill="none" stroke="#e9b400" stroke-width="1.6"/><path d="M7.5 4L8.6 6.6L11.4 7L9 8.4L9.5 11.2L7.4 9.4L4.8 10.4L6 8L4 6L6.8 6.2Z" fill="#dfe3e6" stroke="#8c9094" stroke-width="0.5"/></svg>
<div class="btn" style="left:62px;top:242px;width:192px;height:21px"></div>
<span class="t" style="left:94.0px;top:248.00px;font-size:11px;letter-spacing:-0.098px;">Preview Selected Toolpath</span>
<div class="btn" style="left:62px;top:268px;width:33px;height:19px;border:2px solid #0078d7"></div>
<div class="btn dis" style="left:101px;top:268px;width:33px;height:19px"></div>
<div class="btn" style="left:140px;top:268px;width:33px;height:19px"></div>
<div class="btn" style="left:179px;top:268px;width:33px;height:19px"></div>
<div class="btn dis" style="left:218px;top:268px;width:33px;height:19px"></div>
<svg class="abs" style="left:62px;top:268px" width="190" height="19" viewBox="0 0 190 19"><path d="M10.5 4.5V14.5L16.5 9.5Z" fill="#16166b"/><path d="M48 5V14M52.5 5V14" stroke="#9a9a9a" stroke-width="2"/><path d="M85 4.5V14.5L91 9.5Z" fill="#16166b"/><path d="M92.5 4.5V14.5" stroke="#16166b" stroke-width="1.6"/><path d="M121 4.5V14.5L126.5 9.5Z M127 4.5V14.5L132.5 9.5Z" fill="#16166b"/><path d="M134 4.5V14.5" stroke="#16166b" stroke-width="1.6"/><path d="M163 6.5H174" stroke="#8c8c8c" stroke-width="1.4"/><path d="M163 13.5H174L168.5 8.5Z" fill="#8c8c8c"/></svg>
<span class="t" style="left:72.4px;top:295.00px;font-size:11px;letter-spacing:-0.362px;">Speed</span>
<div class="abs" style="left:115px;top:297px;width:136px;height:4px;background:#e7eaea;border:1px solid #d6d6d6"></div>
<div class="abs" style="left:245px;top:292px;width:6px;height:14px;background:#0078d7"></div>
<div class="abs" style="left:61px;top:311px;width:193px;height:1px;background:#a0a0a0"></div>
<svg class="abs" style="left:24px;top:319px" width="33" height="21" viewBox="0 0 33 21"><path d="M12.8 4L28.5 2.2L32.5 17.5L16.8 20Z" fill="#9c5a2c"/><path d="M12.8 3.5L28.5 1.7L32.2 16.3L16.6 18.6Z" fill="#d8945c"/><path d="M24 5A5.5 5.6 0 0 1 22.5 15.5" fill="none" stroke="#e9b400" stroke-width="1.5"/><path d="M0.5 2.5L19.2 0.5L23 14L4.4 17Z" fill="#9c5a2c"/><path d="M0.5 2L19.2 0L22.8 12.8L4.2 15.7Z" fill="#e3a069"/><path d="M12 2.6A6.4 5.4 -8 1 1 6 8.4" fill="none" stroke="#e9b400" stroke-width="1.5"/><path d="M4.6 2.6L5.5 4.6L7.8 4.9L5.9 6.1L6.3 8.4L4.5 7L2.4 7.8L3.3 5.8L1.8 4.2L4 4.4Z" fill="#dfe3e6" stroke="#8c9094" stroke-width="0.4"/></svg>
<div class="btn" style="left:62px;top:318px;width:192px;height:20px"></div>
<span class="t" style="left:106.2px;top:323.00px;font-size:11px;letter-spacing:-0.060px;">Preview All Toolpaths</span>
<svg class="abs" style="left:24px;top:345px" width="33" height="21" viewBox="0 0 33 21"><path d="M12.8 4L28.5 2.2L32.5 17.5L16.8 20Z" fill="#9c5a2c"/><path d="M12.8 3.5L28.5 1.7L32.2 16.3L16.6 18.6Z" fill="#d8945c"/><path d="M24 5A5.5 5.6 0 0 1 22.5 15.5" fill="none" stroke="#2040c8" stroke-width="1.5"/><path d="M0.5 2.5L19.2 0.5L23 14L4.4 17Z" fill="#9c5a2c"/><path d="M0.5 2L19.2 0L22.8 12.8L4.2 15.7Z" fill="#e3a069"/><path d="M12 2.6A6.4 5.4 -8 1 1 6 8.4" fill="none" stroke="#2040c8" stroke-width="1.5"/><path d="M4.6 2.6L5.5 4.6L7.8 4.9L5.9 6.1L6.3 8.4L4.5 7L2.4 7.8L3.3 5.8L1.8 4.2L4 4.4Z" fill="#dfe3e6" stroke="#8c9094" stroke-width="0.4"/></svg>
<div class="btn" style="left:62px;top:344px;width:192px;height:20px"></div>
<span class="t" style="left:97.2px;top:349.00px;font-size:11px;letter-spacing:-0.154px;">Preview Visible Toolpaths</span>
<svg class="abs" style="left:23.7px;top:373.5px" width="26" height="20" viewBox="0 0 33 26"><defs><linearGradient id="tan5" x1="0" y1="0" x2="1" y2="1"><stop offset="0" stop-color="#e9a972"/><stop offset="1" stop-color="#c98653"/></linearGradient></defs><path d="M1 4.5L27.5 0.8L33 21.5L7 25.8Z" fill="#9c5a2c"/><path d="M1 4L27.5 0.3L32.8 19.8L6.8 24Z" fill="url(#tan5)"/></svg>
<div class="btn" style="left:62px;top:369.5px;width:93px;height:20.5px"></div>
<span class="t" style="left:73.2px;top:375.00px;font-size:11px;letter-spacing:-0.109px;">Reset Preview</span>
<div class="btn dis" style="left:161px;top:369.5px;width:93px;height:20.5px"></div>
<span class="t" style="left:182.5px;top:375.00px;font-size:11px;color:#838383;letter-spacing:-0.128px;">Undo Last</span>
<svg class="abs" style="left:24px;top:396px" width="27" height="21" viewBox="0 0 27 21"><path d="M6 2.5L21.5 1L26 17.5L10 20.5Z" fill="#9c5a2c"/><path d="M6 2L21.5 0.5L25.7 16.3L9.8 19.2Z" fill="#e3a069"/><path d="M17 3.5A6 6 0 0 1 16 14.5" fill="none" stroke="#e9b400" stroke-width="1.5"/><rect x="0" y="0" width="14" height="14" fill="#2f7de0"/><rect x="2.5" y="0.8" width="9" height="5.2" fill="#f4f4f8"/><path d="M2.5 2.2H11.5" stroke="#e04040" stroke-width="0.8"/><rect x="3.5" y="8.5" width="7" height="5.5" fill="#dfe6f2"/><rect x="4.6" y="9.6" width="2" height="3.4" fill="#2f5fb0"/></svg>
<div class="btn" style="left:62px;top:395px;width:192px;height:20.5px"></div>
<span class="t" style="left:108.5px;top:401.00px;font-size:11px;letter-spacing:-0.160px;">Save Preview Image</span>
<svg class="abs" style="left:25px;top:423px" width="27" height="23" viewBox="0 0 27 23"><rect width="27" height="23" fill="#f3f0f0"/><path d="M2 2L22 1L25 19L5 21Z" fill="#f4ddcb"/><circle cx="12" cy="10.5" r="6.8" fill="#dc9868"/><path d="M16.5 8V20L19.2 17.4L21 21.6L22.8 20.8L21 16.8H24.6Z" fill="#fff" stroke="#222" stroke-width="0.9"/></svg>
<span class="t" style="left:60.5px;top:425.00px;font-size:11px;letter-spacing:-0.178px;">Double click on waste areas in 3D view</span>
<span class="t" style="left:61.2px;top:437.00px;font-size:11px;letter-spacing:-0.165px;">to remove them.</span>
<div class="btn" style="left:193px;top:459px;width:73px;height:20.5px"></div>
<span class="t" style="left:215.8px;top:465.00px;font-size:11px;letter-spacing:-0.325px;">Close</span>
<div class="abs" style="left:0;top:486px;width:280px;height:1px;background:#8aa0bb"></div>
<div class="abs" style="left:0;top:487px;width:280px;height:3px;background:#f0f0f0"></div>
<div class="abs" style="left:0;top:490px;width:280px;height:1px;background:#c3cfdc"></div>
<div class="cb" style="left:13px;top:504px"></div>
<span class="t" style="left:33.2px;top:505.00px;font-size:13px;font-weight:700;letter-spacing:0.066px;">Toolpath List</span>
<div class="btn dis" style="left:224px;top:494px;width:21px;height:26px;border-color:#c4c4c4"></div>
<svg class="abs" style="left:224px;top:494px" width="21" height="26" viewBox="0 0 21 26"><path d="M10.5 4L4 11H8.7V21.5H12.3V11H17Z" fill="#d9d9d9" stroke="#b0b0b0" stroke-width="0.8"/></svg>
<div class="btn dis" style="left:247px;top:494px;width:21px;height:26px;border-color:#c4c4c4"></div>
<svg class="abs" style="left:247px;top:494px" width="21" height="26" viewBox="0 0 21 26"><path d="M10.5 22L4 15H8.7V4.5H12.3V15H17Z" fill="#d9d9d9" stroke="#b0b0b0" stroke-width="0.8"/></svg>
<div class="abs" style="left:10px;top:523px;width:260px;height:1px;background:#a0a6ad"></div>
<div class="abs" style="left:10px;top:524px;width:260px;height:1px;background:#f4f7fa"></div>
<div class="cb" style="left:14px;top:530px"></div>
<svg class="abs" style="left:33px;top:530px" width="11" height="14" viewBox="0 0 11 14"><defs><linearGradient id="cyl" x1="0" y1="0" x2="1" y2="0"><stop offset="0" stop-color="#333"/><stop offset="0.25" stop-color="#aaa"/><stop offset="0.55" stop-color="#f4f4f4"/><stop offset="0.85" stop-color="#999"/><stop offset="1" stop-color="#333"/></linearGradient></defs><rect x="0.5" y="0.5" width="10" height="13" fill="url(#cyl)" stroke="#222" stroke-width="1"/><path d="M3 1V13M5.5 1V13M8 1V13" stroke="#8a8a8a" stroke-width="0.8" stroke-dasharray="1 1"/></svg>
<span class="t" style="left:48.2px;top:531.00px;font-size:13px;font-weight:700;letter-spacing:0.078px;">Profile 1</span>
<div class="abs" style="left:9px;top:762px;width:261px;height:1px;background:#9aa3ad"></div>
<div class="abs" style="left:9px;top:763px;width:261px;height:1px;background:#f4f7fa"></div>
<div class="cb" style="left:13px;top:771px"></div>
<svg class="abs" style="left:13px;top:771px" width="13" height="13" viewBox="0 0 13 13"><path d="M2.6 6.6L5.2 9.3L10.5 3.4" fill="none" stroke="#222" stroke-width="1.2"/></svg>
<span class="t" style="left:29.2px;top:772.00px;font-size:13px;letter-spacing:-0.166px;">Show 2D previews</span>
<div class="cb" style="left:148px;top:771px"></div>
<span class="t" style="left:164.5px;top:772.00px;font-size:13px;letter-spacing:0.018px;">Solid</span>
<div class="btn" style="left:247px;top:767px;width:21px;height:22px;background:#dcdcdc"></div>
<svg class="abs" style="left:253px;top:772px" width="9" height="13" viewBox="0 0 9 13"><rect x="0.6" y="0.6" width="7.8" height="11.8" fill="#fff" stroke="#222" stroke-width="1.2"/><path d="M0.6 2H8.4M0.6 6.2H8.4M0.6 10.5H8.4" stroke="#222" stroke-width="1.6"/><rect x="3" y="3.6" width="3" height="1" fill="#555"/><rect x="3" y="7.8" width="3" height="1" fill="#555"/></svg>
</div>
<div id="statusbar">
<span class="t" style="left:2.2px;top:5.00px;font-size:12px;letter-spacing:-0.438px;">Ready</span>
<div class="abs" style="left:1235px;top:2px;width:1px;height:16px;background:#d0d0d0"></div>
<span class="t" style="left:1239.7px;top:6.00px;font-size:11px;letter-spacing:-0.040px;">X: 84.3706 Y: 25.5304 Z:  0.0000</span>
</div>
<div id="taskbar">
<svg class="abs" style="left:15px;top:11px" width="18" height="18" viewBox="0 0 18 18" fill="#000"><path d="M0.7 2.9L7.4 2V8.4H0.7Z M8.3 1.9L17.3 0.6V8.4H8.3Z M0.7 9.3H7.4V15.8L0.7 14.9Z M8.3 9.3H17.3V17.2L8.3 15.9Z"/></svg>
<div class="abs" style="left:49px;top:1px;width:342px;height:39px;background:#fff;border-top:1px solid #c9c9c9"></div>
<svg class="abs" style="left:59px;top:10px" width="18" height="18" viewBox="0 0 18 18" fill="none" stroke="#111" stroke-width="1.2"><circle cx="11" cy="6.8" r="5.2"/><path d="M7.3 10.6L1 17"/></svg>
<span class="t" style="left:88.2px;top:13.00px;font-size:15px;color:#2b2b2b;letter-spacing:-0.241px;">Type here to search</span>
<div class="abs" style="left:408px;top:12px;width:16px;height:16px;border:2.2px solid #111;border-radius:50%"></div>
<svg class="abs" style="left:455px;top:11px" width="18" height="17" viewBox="0 0 18 17" fill="none" stroke="#111" stroke-width="1.1"><rect x="1.6" y="3.6" width="9.8" height="8.8"/><path d="M0.5 1H12.5M0.5 15H12.5M15.5 1V5M15.5 9V15"/><rect x="14.4" y="5.6" width="2.2" height="2.4" fill="#111"/></svg>
<div class="abs" style="left:494px;top:12px;width:1.3px;height:16px;background:#111"></div><div class="abs" style="left:497.3px;top:12px;width:1.3px;height:16px;background:#111"></div>
<svg class="abs" style="left:523px;top:10px" width="24" height="20" viewBox="0 0 24 20"><path d="M0.8 1.2H8.6L10 3.2H0.8Z" fill="#e8a212"/><rect x="0.8" y="2.4" width="21.4" height="15.8" rx="0.8" fill="#ffd766"/><path d="M0.8 6H22.2V17.4Q22.2 18.2 21.4 18.2H1.6Q0.8 18.2 0.8 17.4Z" fill="#fbc94a"/><path d="M3.8 18.2V11.6Q3.8 10.6 4.8 10.6H17.8Q18.8 10.6 18.8 11.6V18.2H15V14.2H7.6V18.2Z" fill="#3a94e6"/></svg>
<div class="abs" style="left:515px;top:38px;width:40px;height:2px;background:#4a4a4a"></div>
<svg class="abs" style="left:572px;top:8px" width="24" height="24" viewBox="-12 -12 24 24"><circle r="11.2" fill="#fff"/><path d="M0 0L-9.7 -5.6A11.2 11.2 0 0 1 9.7 -5.6Z" fill="#e04a3f"/><path d="M0 0L9.7 -5.6A11.2 11.2 0 0 1 0 11.2Z" fill="#fdd24a"/><path d="M0 0L0 11.2A11.2 11.2 0 0 1 -9.7 -5.6Z" fill="#2fa457"/><path d="M0 -5.2H9.9A11.2 11.2 0 0 0 -9.7 -5.6L-4.6 2.8Z" fill="#e04a3f"/><path d="M4.5 2.6L-0.4 11.2A11.2 11.2 0 0 0 9.9 -5.2H0Z" fill="#fdd24a"/><path d="M-4.5 2.6L-9.7 -5.6A11.2 11.2 0 0 0 -0.4 11.2L4.5 2.6Z" fill="#2fa457"/><circle r="5.3" fill="#fff"/><circle r="4.2" fill="#4a8af4"/></svg>
<div class="abs" style="left:564px;top:38px;width:40px;height:2px;background:#4a4a4a"></div>
<svg class="abs" style="left:622px;top:9px" width="22" height="22" viewBox="-11 -11 22 22"><g fill="#333"><rect x="-1.9" y="-9.4" width="3.8" height="4.4" transform="rotate(0)"/><rect x="-1.9" y="-9.4" width="3.8" height="4.4" transform="rotate(45)"/><rect x="-1.9" y="-9.4" width="3.8" height="4.4" transform="rotate(90)"/><rect x="-1.9" y="-9.4" width="3.8" height="4.4" transform="rotate(135)"/><rect x="-1.9" y="-9.4" width="3.8" height="4.4" transform="rotate(180)"/><rect x="-1.9" y="-9.4" width="3.8" height="4.4" transform="rotate(225)"/><rect x="-1.9" y="-9.4" width="3.8" height="4.4" transform="rotate(270)"/><rect x="-1.9" y="-9.4" width="3.8" height="4.4" transform="rotate(315)"/></g><circle r="5.6" fill="none" stroke="#333" stroke-width="3"/></svg>
<svg class="abs" style="left:673px;top:8px" width="18" height="24" viewBox="0 0 18 24"><rect x="0.5" y="0.5" width="17" height="23" rx="1.4" fill="#8e99a3" stroke="#6d7780" stroke-width="1"/><rect x="2.4" y="2.4" width="13.2" height="4.4" fill="#49d3f2"/><rect x="2.4" y="8.6" width="3.4" height="3.6" fill="#e9edf0"/><rect x="7.3" y="8.6" width="3.4" height="3.6" fill="#e9edf0"/><rect x="12.2" y="8.6" width="3.4" height="3.6" fill="#e9edf0"/><rect x="2.4" y="13.4" width="3.4" height="3.6" fill="#e9edf0"/><rect x="7.3" y="13.4" width="3.4" height="3.6" fill="#e9edf0"/><rect x="2.4" y="18.2" width="3.4" height="3.6" fill="#e9edf0"/><rect x="7.3" y="18.2" width="3.4" height="3.6" fill="#e9edf0"/><rect x="12.2" y="13.4" width="3.4" height="8.4" fill="#0f4a8a"/></svg>
<svg class="abs" style="left:719px;top:8px" width="24" height="24" viewBox="0 0 24 24"><rect width="24" height="24" fill="#4aa0f0"/><path d="M6.5 9L10 5.2H17.5V18.4H6.5Z" fill="#fff"/><text x="12" y="17" font-size="4.6" font-weight="700" font-family="Liberation Sans, sans-serif" fill="#4aa0f0" text-anchor="middle">RAR</text></svg>
<div class="abs" style="left:756px;top:0;width:48px;height:40px;background:#e6eef3"></div>
<div class="abs" style="left:756px;top:38px;width:48px;height:2px;background:#4a4a4a"></div>
<svg class="abs" style="left:772px;top:9px" width="16" height="22" viewBox="0 0 16 22"><rect width="16" height="22" fill="#0b6234"/><path d="M8.8 0V14H0V15.6H10.4V0Z" fill="#e6eef3"/></svg>
<div class="abs" style="left:1099.5px;top:12px;width:1.3px;height:16px;background:#111"></div><div class="abs" style="left:1103px;top:12px;width:1.3px;height:16px;background:#111"></div>
<span class="t" style="left:1114.2px;top:14.00px;font-size:12px;color:#1a1a1a;letter-spacing:-0.203px;">Links</span>
<svg class="abs" style="left:1221px;top:11px" width="24" height="17" viewBox="0 0 24 17"><defs><linearGradient id="cl" x1="0" y1="0" x2="1" y2="1"><stop offset="0" stop-color="#ffffff"/><stop offset="0.6" stop-color="#d4e9fb"/><stop offset="1" stop-color="#9ccbf3"/></linearGradient></defs><path d="M5.4 16Q0.6 16 0.6 11.6Q0.6 8 4.4 7.4Q5.4 1 12 1Q17.4 1 18.6 5.6Q23.4 6.2 23.4 11Q23.4 16 18.4 16Z" fill="url(#cl)" stroke="#8fc1ee" stroke-width="0.8"/><path d="M12.5 1.2Q17.2 1.6 18.4 5.8" fill="none" stroke="#3f8fe0" stroke-width="1"/></svg>
<span class="t" style="left:1254.2px;top:14.00px;font-size:13px;color:#2b2b2b;letter-spacing:-0.512px;">14°C</span>
<span class="t" style="left:1290.2px;top:14.00px;font-size:13px;color:#2b2b2b;letter-spacing:0.422px;">Cloudy</span>
<svg class="abs" style="left:1350px;top:14px" width="92" height="16" viewBox="0 0 92 16" fill="none" stroke="#111"><path d="M1 9.5L7 3.2L13 9.5" stroke-width="1.2"/><rect x="27.6" y="3.6" width="11" height="6.2" stroke-width="1.1"/><rect x="29.4" y="5" width="7.6" height="3.4" fill="#111" stroke="none"/><path d="M39.2 5.2V8.2" stroke-width="1.2"/><path d="M23.2 1.8V4.4M25.6 1.8V4.4M22.6 4.6H26.2V6.2Q26.2 7.4 24.4 7.4Q22.6 7.4 22.6 6.2ZM24.4 7.4V9.4H27" stroke-width="1" fill="#111"/><path d="M51.4 13.2A10.6 10.6 0 0 1 62 2.6" stroke-width="1.1"/><path d="M54.6 13.2A7.4 7.4 0 0 1 62 5.8" stroke-width="1.1"/><path d="M57.8 13.2A4.2 4.2 0 0 1 62 9" stroke-width="1.1"/><circle cx="61" cy="12.4" r="1.3" fill="#111" stroke="none"/><path d="M71.6 5.4H74.2L78 2V12.8L74.2 9.4H71.6Z" stroke-width="1.1"/><path d="M80 5.4Q81.4 7.4 80 9.4M82.4 3.6Q85 7.4 82.4 11.2M84.8 2Q88.6 7.4 84.8 12.8" stroke-width="1.1"/></svg>
<span class="t" style="left:1447.2px;top:14.00px;font-size:12px;color:#1a1a1a;letter-spacing:-1.001px;">ENG</span>
<span class="t" style="left:1499.2px;top:5.00px;font-size:12px;color:#1a1a1a;letter-spacing:-0.806px;">18:03</span>
<span class="t" style="left:1483.7px;top:23.00px;font-size:12px;color:#1a1a1a;letter-spacing:-0.356px;">30/06/2021</span>
<svg class="abs" style="left:1558px;top:11px" width="26" height="26" viewBox="0 0 26 26"><path d="M1.2 1H17.4V13.4H7.8L4.6 16.6V13.4H1.2Z" fill="#111"/><path d="M4 4.4H14.6M4 7.2H14.6M4 10H14.6" stroke="#d1e0eb" stroke-width="1.1"/><circle cx="16.6" cy="16.4" r="7.6" fill="#d4d4d4" stroke="#8c8c8c" stroke-width="1"/><text x="16.6" y="20.4" font-size="11" font-family="Liberation Sans, sans-serif" fill="#222" text-anchor="middle">1</text></svg>
<div class="abs" style="left:1595px;top:0;width:1px;height:40px;background:#9aa6b0"></div>
</div>
</body></html>
